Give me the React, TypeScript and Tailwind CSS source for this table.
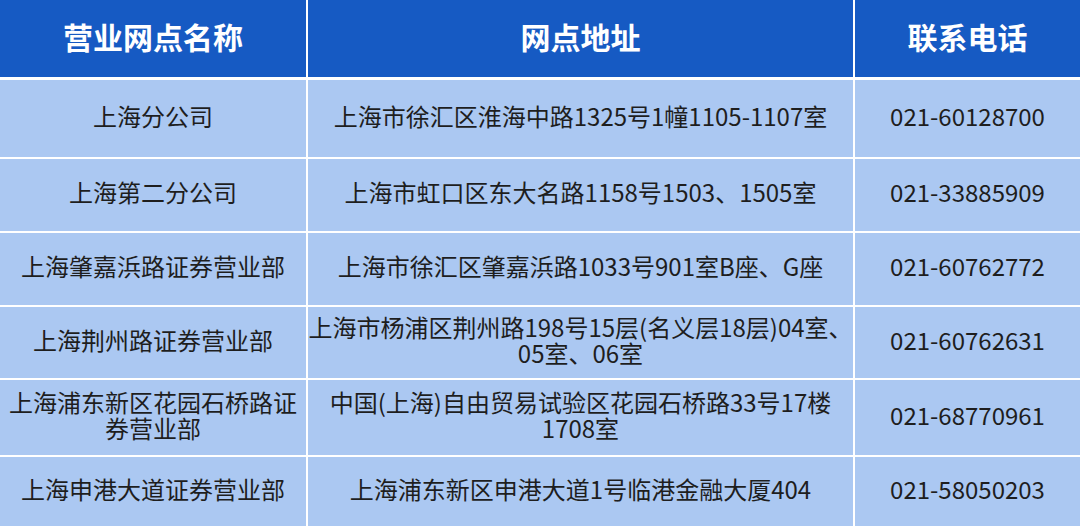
import React from "react";

type Row = { name: React.ReactNode; addr: React.ReactNode; tel: string; h: string };

const rows: Row[] = [
  { name: "上海分公司", addr: "上海市徐汇区淮海中路1325号1幢1105-1107室", tel: "021-60128700", h: "h-[77px]" },
  { name: "上海第二分公司", addr: "上海市虹口区东大名路1158号1503、1505室", tel: "021-33885909", h: "h-[72px]" },
  { name: "上海肇嘉浜路证券营业部", addr: "上海市徐汇区肇嘉浜路1033号901室B座、G座", tel: "021-60762772", h: "h-[72px]" },
  {
    name: "上海荆州路证券营业部",
    addr: (
      <>
        <span className="whitespace-nowrap">上海市杨浦区荆州路198号15层(名义层18层)04室、</span>
        <br />
        05室、06室
      </>
    ),
    tel: "021-60762631",
    h: "h-[71px]",
  },
  {
    name: (
      <>
        上海浦东新区花园石桥路证
        <br />
        券营业部
      </>
    ),
    addr: (
      <>
        中国(上海)自由贸易试验区花园石桥路33号17楼
        <br />
        1708室
      </>
    ),
    tel: "021-68770961",
    h: "h-[75px]",
  },
  { name: "上海申港大道证券营业部", addr: "上海浦东新区申港大道1号临港金融大厦404", tel: "021-58050203", h: "h-[69px]" },
];

const font = { fontFamily: '"Noto Sans CJK SC", "Noto Sans", sans-serif' };

export default function App() {
  return (
    <div className="w-[1080px] h-[526px] overflow-hidden bg-white flex flex-col gap-[2px]" style={font}>
      <div className="grid grid-cols-[306px_545px_225px] gap-[2px] h-[77px] mb-[1px]">
        {["营业网点名称", "网点地址", "联系电话"].map((t) => (
          <div key={t} className="bg-[#165ac3] flex items-center justify-center text-white font-bold text-[30px] pb-[4px]">
            {t}
          </div>
        ))}
      </div>
      {rows.map((r, i) => (
        <div key={i} className={`grid grid-cols-[306px_545px_225px] gap-[2px] ${r.h}`}>
          <div className="bg-[#abc8f2] flex items-center justify-center text-center text-[24px] leading-[26px] text-[#1e1e1e] pb-[6px]">
            <div>{r.name}</div>
          </div>
          <div className="bg-[#abc8f2] flex items-center justify-center text-center text-[24px] leading-[26px] text-[#1e1e1e] pb-[6px]">
            <div>{r.addr}</div>
          </div>
          <div className="bg-[#abc8f2] flex items-center justify-center text-center text-[24px] leading-[26px] text-[#1e1e1e] pb-[6px]">
            <div>{r.tel}</div>
          </div>
        </div>
      ))}
    </div>
  );
}
